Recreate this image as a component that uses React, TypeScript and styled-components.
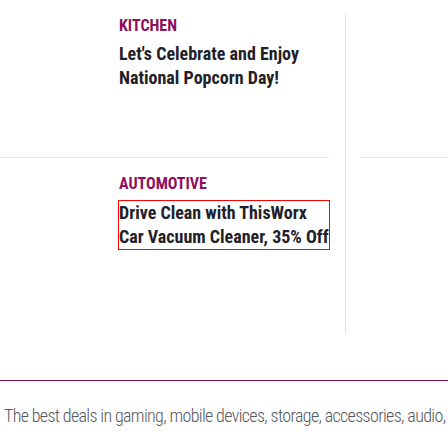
import React from "react";
import styled, { createGlobalStyle } from "styled-components";

const Global = createGlobalStyle`
  html, body { margin: 0; padding: 0; background: #ffffff; }
  body { font-family: "Roboto Condensed", Roboto, "Liberation Sans", sans-serif; font-stretch: 75%; }
`;

const Page = styled.div`
  width: 448px;
  height: 448px;
  overflow: hidden;
  display: flex;
  flex-direction: column;
`;

const Grid = styled.div`
  margin-top: 13px;
  display: grid;
  grid-template-columns: 329px 32px 1fr;
  height: 320px;
`;

const Column = styled.div`
  display: flex;
  flex-direction: column;
`;

const Divider = styled.div`
  display: flex;
  justify-content: center;
  &::before {
    content: "";
    width: 1px;
    background: #e3e3e3;
  }
`;

const Card = styled.div<{ $last?: boolean; $pad: number }>`
  display: flex;
  flex-direction: column;
  align-items: flex-start;
  gap: 6px;
  padding: ${(p) => p.$pad}px 0 0 119px;
  height: ${(p) => (p.$last ? "auto" : "145px")};
  flex: ${(p) => (p.$last ? 1 : "none")};
  box-sizing: border-box;
  border-bottom: ${(p) => (p.$last ? "none" : "1px solid #e3e3e3")};
`;

const Spacer = styled.div`
  height: 145px;
  border-bottom: 1px solid #e3e3e3;
  box-sizing: border-box;
`;

const Category = styled.div`
  font-size: 16px;
  line-height: 20px;
  font-weight: 700;
  color: #8e0f5e;
  text-transform: uppercase;
`;

const Headline = styled.div<{ $boxed?: boolean }>`
  font-size: 18px;
  line-height: 24px;
  font-weight: 700;
  color: #1f2128;
  white-space: nowrap;
  ${(p) => (p.$boxed ? "outline: 1px solid #ff0000; margin-top: 1px;" : "")}
`;

const Rule = styled.div`
  margin-top: 47px;
  height: 1px;
  background: #7a1150;
`;

const Footer = styled.p`
  margin: 0;
  padding: 23px 0 0 4px;
  font-size: 18px;
  line-height: 24px;
  font-weight: 300;
  letter-spacing: -0.65px;
  color: #55575e;
  white-space: nowrap;
`;

export default function App() {
  return (
    <Page>
      <Global />
      <Grid>
        <Column>
          <Card $pad={3}>
            <Category>Kitchen</Category>
            <Headline>
              Let's Celebrate and Enjoy
              <br />
              National Popcorn Day!
            </Headline>
          </Card>
          <Card $last $pad={16}>
            <Category>Automotive</Category>
            <Headline $boxed>
              Drive Clean with ThisWorx
              <br />
              Car Vacuum Cleaner, 35% Off
            </Headline>
          </Card>
        </Column>
        <Divider />
        <Column>
          <Spacer />
        </Column>
      </Grid>
      <Rule />
      <Footer>The best deals in gaming, mobile devices, storage, accessories, audio,</Footer>
    </Page>
  );
}
